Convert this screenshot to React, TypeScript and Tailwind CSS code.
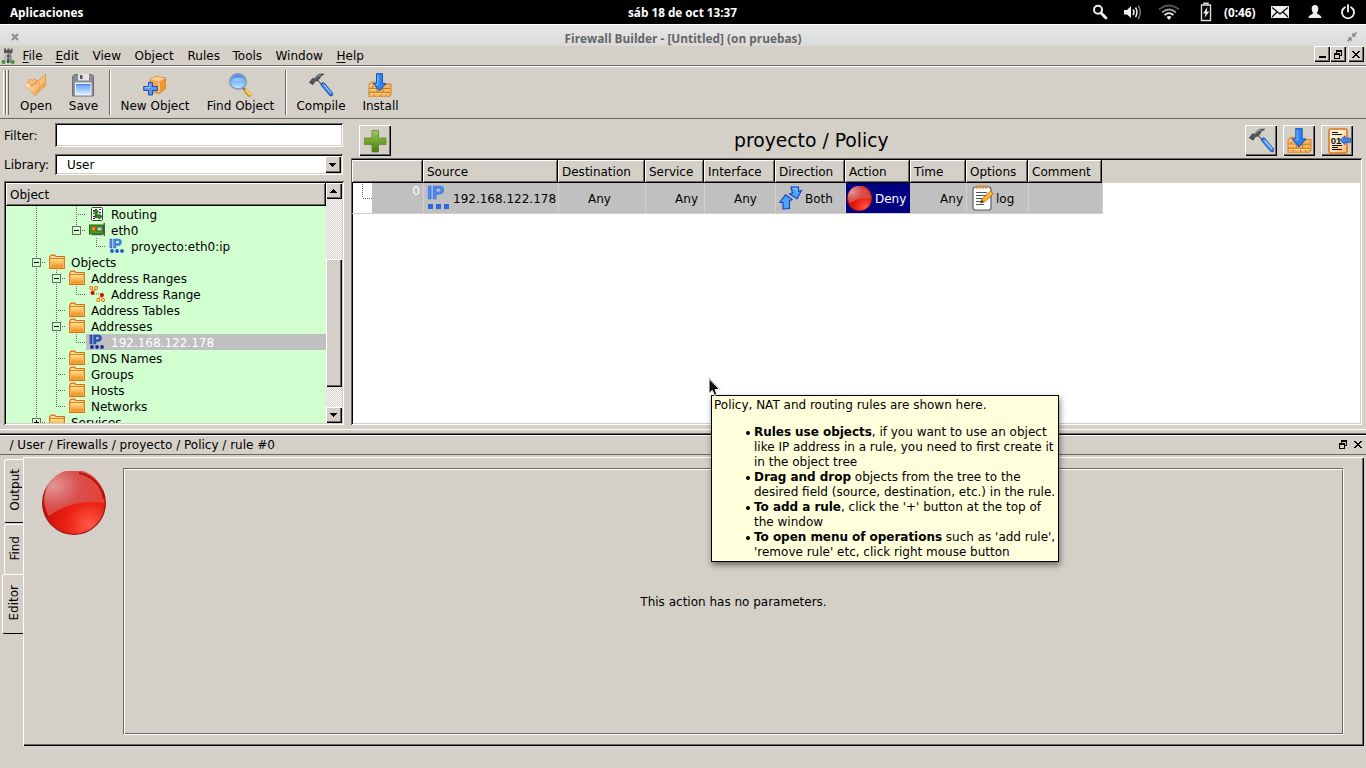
import React from "react";

const RAISED =
  "bg-[#d4d0c8] shadow-[inset_1px_1px_0_#fff,inset_-1px_-1px_0_#000,inset_-2px_-2px_0_#6a6763]";
const HEADER =
  "bg-[#d4d0c8] shadow-[inset_-1px_-1px_0_#000,inset_1px_1px_0_#fff,inset_-2px_-2px_0_#6a6763]";
const SUNKEN =
  "shadow-[inset_1px_1px_0_#6a6763,inset_-1px_-1px_0_#fff,inset_2px_2px_0_#000,inset_-2px_-2px_0_#d4d0c8]";

/* ---------- icons ---------- */

function OpenIcon() {
  return (
    <svg width="24" height="24" viewBox="0 0 24 24">
      <defs>
        <linearGradient id="op" x1="0" y1="0" x2="1" y2="1">
          <stop offset="0" stopColor="#fde0ae" />
          <stop offset="1" stopColor="#f0a04a" />
        </linearGradient>
        <linearGradient id="op2" x1="0" y1="0" x2="1" y2=".6">
          <stop offset="0" stopColor="#fff0d6" />
          <stop offset="1" stopColor="#f3ab5a" />
        </linearGradient>
      </defs>
      <path d="M11 22.500 V10 L12.500 8 L14.500 7.500 L21.500 1.500 V12.500 Z" fill="url(#op)" stroke="#e08e34" strokeWidth=".8" />
      <path d="M3.500 9 L6 6 L8.500 7.500 L10.500 5.500 L12.500 8 L11.500 14 L7 13 Z" fill="#f8bd72" stroke="#d98a35" strokeWidth=".7" />
      <path d="M1 12.500 L3.500 9.500 L7.500 12.500 L15 7.500 L15.500 16 L11 22.500 Z" fill="url(#op2)" stroke="#e39a4a" strokeWidth=".7" />
      <path d="M11 20.500 L16.500 13 L20.500 9 V12.300 Z" fill="#ee9440" opacity=".6" />
      <path d="M7 13.500 L13 9.500" fill="none" stroke="#c98545" strokeWidth="1" />
    </svg>
  );
}

function SaveIcon() {
  return (
    <svg width="24" height="24" viewBox="0 0 24 24">
      <defs>
        <linearGradient id="sv" x1="0" y1="0" x2="0" y2="1">
          <stop offset="0" stopColor="#5d9cf5" />
          <stop offset="1" stopColor="#dbeeff" />
        </linearGradient>
      </defs>
      <path d="M3.500 1.500 H21 L22.500 3 V23 H1.500 V3.500 Z" fill="#8b8b93" stroke="#6d6d75" strokeWidth="1" />
      <rect x="7" y="1" width="11" height="6.500" fill="#e4e4e8" />
      <rect x="9" y="2" width="2.500" height="4" fill="#55555c" />
      <rect x="4" y="9.500" width="16.500" height="13" fill="#f3f6fb" />
      <rect x="5" y="11" width="14.500" height="10.500" fill="url(#sv)" />
      <path d="M5 11.500 H19.500" stroke="#4b7fe2" />
    </svg>
  );
}

function NewObjectIcon() {
  return (
    <svg width="24" height="24" viewBox="0 0 24 24">
      <path d="M7 6.500 L13 3.500 L22.500 5 V16 L16 20.500 L7 18.500 Z" fill="#f6a549" stroke="#c97a25" strokeWidth=".8" />
      <path d="M7.300 6.500 L13 3.800 L22.300 5.200 L16.500 8.500 Z" fill="#ffd293" />
      <path d="M16.500 8.500 L22.500 5.200 V16 L16 20.500 Z" fill="#ee9634" />
      <path d="M16 9 V19" stroke="#ffdba6" strokeWidth="1" />
      <path d="M5.500 9.500 H9.500 V13.500 H14.500 V17.500 H9.500 V22 H5.500 V17.500 H.7 V13.500 H5.500 Z" fill="#5c93ee" stroke="#1c4fae" strokeWidth="1" />
      <path d="M6.700 11 V14.700 H2" fill="none" stroke="#a9cbff" strokeWidth="1" />
    </svg>
  );
}

function FindIcon() {
  return (
    <svg width="24" height="24" viewBox="0 0 24 24">
      <defs>
        <linearGradient id="fi" x1="0" y1="0" x2="0" y2="1">
          <stop offset="0" stopColor="#2e86ee" />
          <stop offset="1" stopColor="#c4efff" />
        </linearGradient>
      </defs>
      <path d="M14.500 14.500 L18 18" stroke="#777" strokeWidth="2.500" />
      <path d="M17 17 L22.500 23" stroke="#c98a18" strokeWidth="4" />
      <path d="M17.300 16.600 L22.500 22.200" stroke="#ffd24d" strokeWidth="2.200" />
      <ellipse cx="10" cy="8.500" rx="8.200" ry="7.600" fill="url(#fi)" stroke="#8a9bb5" strokeWidth="1.600" />
      <path d="M4 7 Q10 2 16 7 Q10 9 4 7" fill="#fff" opacity=".35" />
    </svg>
  );
}

function HammerIcon({ size = 24 }: { size?: number }) {
  return (
    <svg width={size} height={size} viewBox="0 0 24 24">
      <path d="M8.500 5.500 L14.500 12.500" stroke="#6f6f6f" strokeWidth="3" />
      <path d="M9 5 L14.500 11.500" stroke="#e8e8e8" strokeWidth="1.200" />
      <path d="M14 11.500 L22 21" stroke="#174fa8" strokeWidth="4.400" strokeLinecap="round" />
      <path d="M14.200 11.700 L21.900 20.800" stroke="#3f90f2" strokeWidth="2.900" strokeLinecap="round" />
      <path d="M15 11.800 L22 19.800" stroke="#bfe0ff" strokeWidth="1" />
      <path d="M.5 9.500 L3.500 5.500 L5 6 L7.500 3 Q10 .3 15 1.200 Q11.500 2 10.500 5.500 L8 8.200 L6.500 7.500 L4 11.500 Z" fill="#55585a" stroke="#343637" strokeWidth=".8" />
      <path d="M5.500 5.800 Q8 2 12 1.800" fill="none" stroke="#a3a6a8" strokeWidth="1" />
    </svg>
  );
}

function InstallIcon({ size = 24 }: { size?: number }) {
  return (
    <svg width={size} height={size} viewBox="0 0 24 24">
      <path d="M1 11 L4 9 H10 L12 13 L15 13 L18 11 H23 V22 L20 24 H1 Z" fill="#f7b45e" stroke="#cf7a1c" strokeWidth=".9" />
      <path d="M1 15.500 H9 M1 19.500 H22 M4.500 11.500 V15.500 M9 15.500 V19.500 M15 15.500 V19.500 M6 19.500 V23.500 M13 19.500 V23.500 M18 19.500 V23.500 M13 15.500 H22.500" stroke="#d27a18" strokeWidth="1" />
      <path d="M1.500 12.200 H8 M1.500 16.500 H8 M2 20.600 H20" stroke="#ffdca8" strokeWidth="1" />
      <path d="M8.500 .7 H14.500 V10.500 H18 L11.500 18 L5.200 10.500 H8.500 Z" fill="#2d86f0" stroke="#1650bd" strokeWidth="1" />
      <path d="M9.800 1.800 V11.500 H7.500" fill="none" stroke="#8cc4ff" strokeWidth="1" />
    </svg>
  );
}

function TransferIcon() {
  return (
    <svg width="24" height="26" viewBox="0 0 24 26">
      <defs>
        <linearGradient id="tr" x1="0" y1="0" x2="1" y2="1">
          <stop offset="0.3" stopColor="#fff5df" />
          <stop offset="1" stopColor="#f8b26a" />
        </linearGradient>
      </defs>
      <rect x="2" y="1" width="18" height="24" rx="1.500" fill="url(#tr)" stroke="#e0721a" strokeWidth="1.500" />
      <path d="M5 4.500 H11 M5 6.500 H15 M5 17.500 H15 M5 19.500 H11 M5 21.500 H15" stroke="#111" strokeWidth="1" />
      <text x="3.800" y="15.500" fontFamily="Liberation Sans, sans-serif" fontWeight="bold" fontSize="9.500" fill="#111">01</text>
      <path d="M13 12.200 L18 7.800 V10.200 H23.500 V14.400 H18 V16.600 Z" fill="#3c86ec" stroke="#1d50b0" strokeWidth=".8" />
    </svg>
  );
}

function PlusIcon() {
  return (
    <svg width="24" height="24" viewBox="0 0 24 24">
      <defs>
        <linearGradient id="pl" x1="0" y1="0" x2="0" y2="1">
          <stop offset="0" stopColor="#9ccb52" />
          <stop offset="1" stopColor="#4a7d0f" />
        </linearGradient>
      </defs>
      <path d="M9 1.500 H15.500 V9 H23 V15.500 H15.500 V23 H9 V15.500 H1.500 V9 H9 Z" fill="url(#pl)" stroke="#5c8526" strokeOpacity=".75" strokeWidth="1" strokeLinejoin="round" />
    </svg>
  );
}

function RedBall({ size }: { size: number }) {
  return (
    <svg width={size} height={size} viewBox="0 0 64 64" className="shrink-0">
      <defs>
        <radialGradient id="rb1" cx=".75" cy=".85" r=".8">
          <stop offset="0" stopColor="#ff5a48" />
          <stop offset=".45" stopColor="#ec2315" />
          <stop offset="1" stopColor="#c90a06" />
        </radialGradient>
        <radialGradient id="rb2" cx=".15" cy=".35" r=".95">
          <stop offset="0" stopColor="#e39696" />
          <stop offset=".5" stopColor="#d94d4b" />
          <stop offset="1" stopColor="#ea4033" />
        </radialGradient>
      </defs>
      <circle cx="32" cy="32" r="31.300" fill="url(#rb1)" stroke="#9a1512" strokeWidth="1.200" />
      <path d="M7 45 A30 30 0 1 1 62 32 Q30 27.500 7 45" fill="url(#rb2)" />
      <path d="M37 2 A30.500 30.500 0 0 1 62 28" fill="none" stroke="#b30000" strokeWidth="2" opacity=".8" />
    </svg>
  );
}

function FolderIcon() {
  return (
    <svg width="16" height="16" viewBox="0 0 16 16" className="shrink-0">
      <defs>
        <linearGradient id="fo" x1="0" y1="0" x2="0" y2="1">
          <stop offset="0" stopColor="#ffdf84" />
          <stop offset="1" stopColor="#ef8a1c" />
        </linearGradient>
      </defs>
      <path d="M.7 14.300 V3 L2 1.200 H5.500 L7 2.500 H15.300 V14.300 Z" fill="#ffe0a0" stroke="#e06a08" strokeWidth="1.200" />
      <path d="M1 4.500 H15" stroke="#e87b18" strokeWidth="1" />
      <rect x="2" y="5.500" width="12" height="8" fill="url(#fo)" />
    </svg>
  );
}

function IpIcon({ big, dark }: { big?: boolean; dark?: boolean }) {
  const c = dark ? "#2f62d8" : "#4f92f5";
  const s = dark ? "#12309a" : "#1d55cf";
  if (big)
    return (
      <svg width="24" height="24" viewBox="0 0 24 24" className="shrink-0 overflow-visible">
        <text x="0" y="13.300" fontFamily="Liberation Sans, sans-serif" fontWeight="bold" fontSize="18" textLength="17" lengthAdjust="spacingAndGlyphs" fill="#4a8df3" stroke="#2f6fe6" strokeWidth=".7">IP</text>
        <path d="M1 18h5v5H1z M9 18h5v5H9z M17 18h5v5H17z" fill="#2f68e2" />
      </svg>
    );
  return (
    <svg width="16" height="16" viewBox="0 0 16 16" className="shrink-0 overflow-visible">
      <text x="0" y="9.500" fontFamily="Liberation Sans, sans-serif" fontWeight="bold" fontSize="13" textLength="12.500" lengthAdjust="spacingAndGlyphs" fill={c} stroke={s} strokeWidth=".6">IP</text>
      <circle cx="3" cy="13" r="1.900" fill={s} />
      <circle cx="8" cy="13" r="1.900" fill={s} />
      <circle cx="13" cy="13" r="1.900" fill={s} />
    </svg>
  );
}

function RoutingIcon() {
  return (
    <svg width="16" height="16" viewBox="0 0 16 16" className="shrink-0">
      <rect x="2.500" y="1.500" width="11" height="13" rx="1" fill="#fff" stroke="#444" />
      <path d="M4 4.500h3M10 3.500h2M4 7.500h1M10 6.500h2M4 12.500h2M4 10.500h2" stroke="#222" />
      <path d="M6 10.500 V6 H4.500 L7 2.800 L9.500 6 H8.200 V9.300 H10 V7.800 L13.200 10.500 L10 13.200 V11.700 H6 Z" fill="#2d8a1a" stroke="#145208" strokeWidth=".7" />
    </svg>
  );
}

function NicIcon() {
  return (
    <svg width="16" height="16" viewBox="0 0 16 16" className="shrink-0">
      <rect x=".5" y="3" width="14" height="9" fill="#37a60d" stroke="#1e6a06" />
      <rect x="3" y="5" width="3.500" height="3.500" fill="#f0a040" stroke="#d03020" strokeWidth=".8" />
      <rect x="8" y="5" width="5" height="4" fill="#c7cfc2" stroke="#444" strokeWidth=".8" />
      <path d="M3 12.500H13" stroke="#555" strokeWidth="1.500" />
      <path d="M15.300 1V14" stroke="#555" strokeWidth="1.400" />
    </svg>
  );
}

function RangeIcon() {
  return (
    <svg width="16" height="16" viewBox="0 0 16 16" className="shrink-0">
      <g fill="#fff2c0" stroke="#ea7410" strokeWidth="1.100">
        <circle cx="2.200" cy="2" r="1.500" />
        <circle cx="7" cy="2" r="1.500" />
        <circle cx="9.200" cy="14" r="1.500" />
        <circle cx="14" cy="14" r="1.500" />
        <path d="M3 3.500 L4 6 M6.500 3.500 L4 6 M12.500 9 L10 12.500 M12.500 9 L13.500 12.500" />
      </g>
      <path d="M5 8H12" stroke="#2d9a1a" strokeDasharray="1 1" />
      <circle cx="3.500" cy="7" r="2" fill="#d40808" />
      <circle cx="13" cy="9" r="2" fill="#d40808" />
    </svg>
  );
}

function BothIcon() {
  return (
    <svg width="24" height="24" viewBox="0 0 24 24" className="shrink-0">
      <g fill="#49a5f8" stroke="#163cc4" strokeWidth="1.100">
        <path d="M12 1 H19.500 V5.500 L22.500 4.500 L18 12.800 L10.500 8 L13.500 7 Z" />
        <path d="M4 23 V16.500 L.8 16.500 L6.500 8.800 L13 13.500 L10.500 15 V22.500 Z" />
      </g>
      <path d="M14 2.500 H18 V7" fill="none" stroke="#8fd0ff" />
    </svg>
  );
}

function LogIcon() {
  return (
    <svg width="22" height="26" viewBox="0 0 22 26" className="shrink-0">
      <rect x="1" y="2" width="18" height="23" rx="2.500" fill="#fdfdfd" stroke="#5d5d68" strokeWidth="1.200" />
      <path d="M5 0V4M8 0V4M11 0V4M14 0V4" stroke="#f08a1c" strokeWidth="1.300" />
      <path d="M4 7.500h11M4 10.500h11M4 13.500h8M4 16.500h6M4 19.500h8" stroke="#555" strokeWidth="1.200" />
      <path d="M8.500 18 L10 14 L18.500 6 L21.500 8.500 L13 16.500 Z" fill="#ffb52e" stroke="#c06c10" strokeWidth=".9" />
      <path d="M8.500 18 L9.800 14.800 L12 17 Z" fill="#333" />
    </svg>
  );
}

function TowerIcon() {
  return (
    <svg width="14" height="16" viewBox="0 0 14 16">
      <path d="M3 .5h2v1.500h1.500V.5h2V2H10V.5h1.500V5H3Z" fill="#555" />
      <path d="M4.200 5h6l.9 10H3.300Z" fill="#8b8b8b" />
      <path d="M4.500 5h2l-.3 10H4Z" fill="#c4c4c4" />
      <path d="M7 7v2.500M7 11v4" stroke="#333" strokeWidth="1.500" />
      <circle cx="2.500" cy="14" r="2" fill="#3f9c2b" />
      <circle cx="11.800" cy="14" r="2" fill="#3f9c2b" />
    </svg>
  );
}

function RestoreGlyph() {
  return (
    <svg width="9" height="9" viewBox="0 0 9 9" shapeRendering="crispEdges">
      <path d="M2 0H8V6H6V5H7V2H3V3H2Z M0 3H6V9H0Z M1 5V8H5V5Z" fill="#000" fillRule="evenodd" />
    </svg>
  );
}

function CloseGlyph() {
  return (
    <svg width="8" height="7" viewBox="0 0 8 7" shapeRendering="crispEdges">
      <path d="M0 0H2V1H3V2H5V1H6V0H8V1H7V2H6V3H5V4H6V5H7V6H8V7H6V6H5V5H3V6H2V7H0V6H1V5H2V4H3V3H2V2H1V1H0Z" />
    </svg>
  );
}

/* ---------- desktop panel and title bar ---------- */

function DesktopPanel() {
  return (
    <div className="flex h-6 items-center bg-black pl-2.5 pr-2.5 font-['Open_Sans','Noto_Sans',sans-serif] text-[11.750px] font-bold text-white">
      <div className="w-[618px]">Aplicaciones</div>
      <div className="flex-1 whitespace-nowrap">sáb 18 de oct 13:37</div>
      <svg width="16" height="16" viewBox="0 0 16 16" className="mr-[15px]">
        <circle cx="6" cy="5.800" r="4" fill="none" stroke="#eee" strokeWidth="2" />
        <path d="M9 9 L14 14" stroke="#eee" strokeWidth="2.800" strokeLinecap="round" />
      </svg>
      <svg width="20" height="16" viewBox="0 0 20 16" className="mr-[15px]">
        <path d="M1 6H4L8 2V14L4 10.500H1Z" fill="#eee" />
        <path d="M10 5.500Q12 8 10 11M12.500 3.500Q15.500 8 12.500 13" fill="none" stroke="#eee" strokeWidth="1.500" />
        <path d="M15.200 1.500Q19.500 8 15.200 15" fill="none" stroke="#777" strokeWidth="1.500" />
      </svg>
      <svg width="22" height="16" viewBox="0 0 22 16" className="mr-5">
        <g fill="none" strokeWidth="1.800">
          <path d="M1 5.500Q11 -2.500 21 5.500" stroke="#555" />
          <path d="M4 8.500Q11 2.500 18 8.500" stroke="#999" />
          <path d="M6.500 11.200Q11 7 15.500 11.200" stroke="#eee" />
        </g>
        <path d="M8.500 13 Q11 11 13.500 13 L11 16Z" fill="#eee" />
      </svg>
      <svg width="12" height="20" viewBox="0 0 12 20" className="mr-[11px]">
        <path d="M4 3V1.200H8V3M1.500 3H10.500V18.500H1.500Z" fill="none" stroke="#ddd" strokeWidth="1.400" />
        <path d="M7.500 5L3 11.500H5.500L4.500 16L9.300 9.500H6.800Z" fill="#eee" />
      </svg>
      <div className="mr-[12px] w-[35px] whitespace-nowrap pl-px">(0:46)</div>
      <svg width="20" height="14" viewBox="0 0 20 14" className="mr-[17px]">
        <rect x="1" y="1" width="18" height="12" fill="#eee" />
        <path d="M2 2.500L10 9L18 2.500M2 12L7 7M18 12L13 7" fill="none" stroke="#000" strokeWidth="1.100" />
      </svg>
      <svg width="16" height="16" viewBox="0 0 16 16" className="mr-[17px]">
        <path d="M8 1C10.500 1 11.500 2.800 11.300 5C11.200 7 10.300 8 10 9C10 10.500 14.500 10.800 14.500 14H1.500C1.500 10.800 6 10.500 6 9C5.700 8 4.800 7 4.700 5C4.500 2.800 5.500 1 8 1Z" fill="#eee" />
      </svg>
      <svg width="16" height="16" viewBox="0 0 16 16">
        <path d="M5 3.200A6 6 0 1 0 11 3.200" fill="none" stroke="#eee" strokeWidth="1.900" strokeLinecap="round" />
        <path d="M8 1V7.500" stroke="#eee" strokeWidth="1.900" strokeLinecap="round" />
      </svg>
    </div>
  );
}

function TitleBar() {
  return (
    <div className="flex h-[22px] items-center justify-between border-t border-white bg-linear-to-b from-[#e8e8e8] to-[#dadada] pl-[11px] pr-[9px] pt-1 font-['Open_Sans','Noto_Sans',sans-serif] text-[11.850px] font-bold text-[#666]">
      <svg width="8" height="8" viewBox="0 0 8 8" className="mb-[2px]">
        <path d="M1 1L7 7M7 1L1 7" stroke="#8c8c8c" strokeWidth="2" />
      </svg>
      <span className="pt-px">Firewall Builder - [Untitled] (on pruebas)</span>
      <svg width="10" height="10" viewBox="0 0 10 10" fill="#888" className="mb-[2px]">
        <path d="M5.200 4.800V.5L6.800 2L9 0L10 1L8 3.300L9.500 4.800Z M4.800 5.200V9.500L3.200 8L1 10L0 9L2 6.700L.5 5.200Z" />
      </svg>
    </div>
  );
}

/* ---------- menus and toolbar ---------- */

const MENUS: [string, boolean, string][] = [
  ["File", true, "w-[33px]"],
  ["Edit", true, "w-[37px]"],
  ["View", false, "w-[42px]"],
  ["Object", false, "w-[53px]"],
  ["Rules", false, "w-[45px]"],
  ["Tools", false, "w-[43px]"],
  ["Window", false, "w-[61px]"],
  ["Help", true, "w-[40px]"],
];

function MenuBar() {
  return (
    <div className="flex h-[21px] border-b border-white">
      <div className="flex flex-1 border-b border-[#6a6763]">
        <div className="w-[22.500px] pl-px pt-[2px]">
          <TowerIcon />
        </div>
        {MENUS.map(([label, hot, width]) => (
          <div key={label} className={`${width} h-[19px] pt-px leading-[19px]`}>
            {hot ? <span className="underline underline-offset-2">{label[0]}</span> : label[0]}
            {label.slice(1)}
          </div>
        ))}
        <div className="ml-auto flex pr-[2px]">
          <div className={`flex h-4 w-4 items-end justify-center pb-[4px] ${RAISED}`}>
            <div className="h-[2px] w-[7px] bg-black" />
          </div>
          <div className={`mr-[2px] flex h-4 w-4 items-center justify-center ${RAISED}`}>
            <RestoreGlyph />
          </div>
          <div className={`flex h-4 w-4 items-center justify-center ${RAISED}`}>
            <CloseGlyph />
          </div>
        </div>
      </div>
    </div>
  );
}

function Tool({ label, width, children }: { label: string; width: string; children: React.ReactNode }) {
  return (
    <div className={`flex ${width} flex-col items-center pt-[6px]`}>
      {children}
      <span className="mt-[2px] whitespace-nowrap pl-px leading-[15px]">{label}</span>
    </div>
  );
}

function Separator({ className }: { className: string }) {
  return <div className={`mt-[3px] h-[45px] w-[2px] border-l border-r border-l-[#6a6763] border-r-white ${className}`} />;
}

function Toolbar() {
  return (
    <div className="flex h-[52px] border-b border-[#6a6763]">
      <div className="ml-[3px] mr-[3px] mt-[3px] flex h-[45px] w-[6px]">
        <div className="w-[3px] border-l border-r border-l-white border-r-[#6a6763]" />
        <div className="w-[3px] border-l border-r border-l-white border-r-[#6a6763]" />
      </div>
      <Tool label="Open" width="w-[47px]"><OpenIcon /></Tool>
      <Tool label="Save" width="w-[48px]"><SaveIcon /></Tool>
      <Separator className="ml-[2px]" />
      <Tool label="New Object" width="w-[87px]"><NewObjectIcon /></Tool>
      <Tool label="Find Object" width="w-[84px]"><FindIcon /></Tool>
      <Separator className="ml-[3px]" />
      <Tool label="Compile" width="w-[67px]"><HammerIcon /></Tool>
      <Tool label="Install" width="w-[52px]"><InstallIcon /></Tool>
    </div>
  );
}

/* ---------- object tree ---------- */

type Guide = " " | "|" | "+" | "L" | "-" | "_" | "P";
type Node = { guides: string; label: string; icon: React.ReactNode; selected?: boolean };

function GuideCell({ kind }: { kind: Guide }) {
  const box = kind === "-" || kind === "_" || kind === "P";
  const top = kind !== " ";
  const bottom = kind === "|" || kind === "+" || kind === "-" || kind === "P";
  const side = kind !== " " && kind !== "|";
  return (
    <svg width="20" height="16" viewBox="0 0 20 16" shapeRendering="crispEdges" className="shrink-0">
      <g stroke="#6a6763" strokeDasharray="1 1">
        {top && <path d="M10.500 0V8" />}
        {bottom && <path d="M10.500 8V16" />}
        {side && <path d="M10 8.500H20" />}
      </g>
      {box && (
        <>
          <rect x="6.500" y="4.500" width="8" height="8" fill="#d2ffd0" stroke="#6a6763" />
          <path d="M8 8.500H13" stroke="#000" />
          {kind === "P" && <path d="M10.500 6V11" stroke="#000" />}
        </>
      )}
    </svg>
  );
}

const NODES: Node[] = [
  { guides: " | +", label: "Routing", icon: <RoutingIcon /> },
  { guides: " | _", label: "eth0", icon: <NicIcon /> },
  { guides: " |  L", label: "proyecto:eth0:ip", icon: <IpIcon /> },
  { guides: " -", label: "Objects", icon: <FolderIcon /> },
  { guides: " |-", label: "Address Ranges", icon: <FolderIcon /> },
  { guides: " ||L", label: "Address Range", icon: <RangeIcon /> },
  { guides: " |+", label: "Address Tables", icon: <FolderIcon /> },
  { guides: " |-", label: "Addresses", icon: <FolderIcon /> },
  { guides: " ||L", label: "192.168.122.178", icon: <IpIcon dark />, selected: true },
  { guides: " |+", label: "DNS Names", icon: <FolderIcon /> },
  { guides: " |+", label: "Groups", icon: <FolderIcon /> },
  { guides: " |+", label: "Hosts", icon: <FolderIcon /> },
  { guides: " |L", label: "Networks", icon: <FolderIcon /> },
  { guides: " P", label: "Services", icon: <FolderIcon /> },
];

const DITHER =
  "bg-[repeating-conic-gradient(#ffffff_0_25%,#d4d0c8_0_50%)] bg-[length:2px_2px]";

function Arrow({ down }: { down?: boolean }) {
  return (
    <svg width="8" height="4" viewBox="0 0 8 4" shapeRendering="crispEdges">
      <path d={down ? "M0 0H7V1H6V2H5V3H4V4H3V3H2V2H1V1H0Z" : "M3 0H4V1H5V2H6V3H7V4H0V3H1V2H2V1H3Z"} />
    </svg>
  );
}

function ObjectPanel() {
  return (
    <div className="flex w-[344px] shrink-0 flex-col pl-1 pt-1">
      <div className="flex h-6 w-[339px] items-center">
        <label className="w-[51px] pt-[2px]">Filter:</label>
        <div className={`h-6 flex-1 bg-white ${SUNKEN}`} />
      </div>
      <div className="mt-[7px] flex h-[21px] w-[339px] items-center">
        <label className="w-[51px] pt-[2px]">Library:</label>
        <div className={`flex h-[21px] flex-1 items-center bg-white pl-3 pr-[2px] ${SUNKEN}`}>
          <span className="flex-1 pt-[2px]">User</span>
          <div className={`flex h-[17px] w-4 items-center justify-center ${RAISED}`}>
            <Arrow down />
          </div>
        </div>
      </div>
      <div className={`mt-[6px] flex h-[244px] w-[340px] bg-[#d2ffd0] p-[2px] ${SUNKEN}`}>
        <div className="flex w-80 flex-col overflow-hidden">
          <div className={`h-[23px] shrink-0 pl-1 leading-[24px] ${HEADER}`}>Object</div>
          <div className="h-[217px] overflow-hidden">
            {NODES.map((n) => (
              <div key={n.label} className="flex h-4">
                {n.guides.split("").map((g, i) => (
                  <GuideCell key={i} kind={g as Guide} />
                ))}
                <div className={`flex flex-1 pl-[3px] leading-[18px] ${n.selected ? "bg-[#c0c0c0] text-white" : ""}`}>
                  {n.icon}
                  <span className="pl-[6px]">{n.label}</span>
                </div>
              </div>
            ))}
          </div>
        </div>
        <div className={`flex w-4 flex-col ${DITHER}`}>
          <div className={`flex h-4 items-center justify-center ${RAISED}`}><Arrow /></div>
          <div className={`mt-[60px] h-32 ${RAISED}`} />
          <div className={`mt-5 flex h-4 items-center justify-center ${RAISED}`}><Arrow down /></div>
        </div>
      </div>
    </div>
  );
}

/* ---------- rules table ---------- */

const COLS: [string, string][] = [
  ["", "w-[71px]"],
  ["Source", "w-[135px]"],
  ["Destination", "w-[87px]"],
  ["Service", "w-[59px]"],
  ["Interface", "w-[71px]"],
  ["Direction", "w-[70px]"],
  ["Action", "w-[65px]"],
  ["Time", "w-[56px]"],
  ["Options", "w-[62px]"],
  ["Comment", "w-[74px]"],
];

function Cell({ className, children }: { className: string; children?: React.ReactNode }) {
  return (
    <div className={`flex h-[30px] items-center whitespace-nowrap border-r border-[#d4d0c8] bg-[#c0c0c0] ${className}`}>
      {children}
    </div>
  );
}

function PolicyPanel() {
  return (
    <div className="ml-[7px] flex w-[1011px] flex-col">
      <div className="flex h-[39px] items-start pl-2 pr-[9px] pt-[6px]">
        <div className={`flex h-[31px] w-8 items-center justify-center ${RAISED}`}><PlusIcon /></div>
        <h1 className="flex-1 pl-[343px] pt-[2px] text-[18.750px] leading-[28px]">proyecto / Policy</h1>
        <div className="flex gap-[6px]">
          <div className={`flex h-[31px] w-8 items-center justify-center ${RAISED}`}><HammerIcon size={25} /></div>
          <div className={`flex h-[31px] w-8 items-center justify-center ${RAISED}`}><InstallIcon size={25} /></div>
          <div className={`flex h-[31px] w-8 items-center justify-center pl-[3px] ${RAISED}`}><TransferIcon /></div>
        </div>
      </div>
      <div className={`h-[267px] bg-white p-[2px] pl-px ${SUNKEN}`}>
        <div className="flex h-[23px] bg-[#d4d0c8]">
          {COLS.map(([name, width]) => (
            <div key={name} className={`${width} h-[23px] pl-1 pt-px leading-[23px] ${HEADER}`}>{name}</div>
          ))}
        </div>
        <div className="flex h-[31px] border-b border-[#d4d0c8] pl-[10px] [clip-path:inset(0_257px_0_0)]">
          <svg width="10" height="30" viewBox="0 0 10 30" shapeRendering="crispEdges">
            <path d="M.5 1V15M1 15.500H10" stroke="#6a6763" strokeDasharray="1 1" />
          </svg>
          <Cell className="w-[52px] justify-end pb-[13px] pr-[3px] text-white">0</Cell>
          <Cell className="w-[135px] pl-[3px]">
            <IpIcon big />
            <span className="pl-[2px] pt-[2px]">192.168.122.178</span>
          </Cell>
          <Cell className="w-[87px] pl-[29px] pt-[2px]">Any</Cell>
          <Cell className="w-[59px] justify-end pr-[6px] pt-[2px]">Any</Cell>
          <Cell className="w-[71px] pl-[29px] pt-[2px]">Any</Cell>
          <Cell className="w-[70px] pl-[3px]">
            <BothIcon />
            <span className="pl-[2px] pt-[2px]">Both</span>
          </Cell>
          <div className="flex h-[30px] w-[64px] items-center gap-[3px] bg-[#000080] pl-px text-white">
            <RedBall size={25} />
            <span className="pt-[2px]">Deny</span>
          </div>
          <Cell className="w-[57px] justify-end pr-[3px] pt-[2px]">Any</Cell>
          <Cell className="w-[62px] pl-[5px]">
            <LogIcon />
            <span className="pl-[2px] pt-[2px]">log</span>
          </Cell>
          <Cell className="w-[74px]" />
        </div>
      </div>
    </div>
  );
}

/* ---------- editor dock ---------- */

function SideTab({ label, className }: { label: string; className: string }) {
  return (
    <div className={`flex items-center justify-center rounded-l-[3px] border-l border-t border-white pb-[2px] pl-[2px] ${className}`}>
      <span className="rotate-180 leading-[15px] [writing-mode:vertical-rl]">{label}</span>
    </div>
  );
}

function EditorDock() {
  return (
    <div className="flex flex-1 flex-col border-t border-white">
      <div className="mt-[3px] h-px bg-[#6a6763]" />
      <div className="h-px bg-black" />
      <div className="flex h-5 items-center border-b border-t border-b-[#6a6763] border-t-white pl-[9.500px] pr-1">
        <span className="flex-1 pt-px">/ User / Firewalls / proyecto / Policy / rule #0</span>
        <div className="mb-[2px] flex items-center gap-[6px]">
          <RestoreGlyph />
          <CloseGlyph />
        </div>
      </div>
      <div className="mt-[2px] flex h-[289px]">
        <div className="flex w-[23px] shrink-0 flex-col items-end pt-[2px]">
          <SideTab label="Output" className="h-[64px] w-[19px] border-b border-b-black" />
          <SideTab label="Find" className="mt-px h-[50px] w-[19px]" />
          <SideTab label="Editor" className="h-[60px] w-[21px] border-b border-b-black" />
        </div>
        <div className="flex h-[289px] w-[1341px] pl-[19px] pr-[20px] pt-[11px] shadow-[inset_1px_1px_0_#fff,inset_-1px_-1px_0_#000,inset_-2px_-2px_0_#6a6763]">
          <div className="w-[81px] pt-[3px]">
            <RedBall size={64} />
          </div>
          <div className="flex h-[267px] flex-1 items-center justify-center border border-white border-l-[#6a6763] border-t-[#6a6763] pt-[2px] shadow-[inset_1px_1px_0_#fff,inset_-1px_-1px_0_#6a6763]">
            <span>This action has no parameters.</span>
          </div>
        </div>
      </div>
    </div>
  );
}

/* ---------- floating help ---------- */

const HELP: [string, string[]][] = [
  ["Rules use objects", [", if you want to use an object", "like IP address in a rule, you need to first create it", "in the object tree"]],
  ["Drag and drop", [" objects from the tree to the", "desired field (source, destination, etc.) in the rule."]],
  ["To add a rule", [", click the '+' button at the top of", "the window"]],
  ["To open menu of operations", [" such as 'add rule',", "'remove rule' etc, click right mouse button"]],
];

function HelpTip() {
  return (
    <div className="absolute left-[711px] top-[395px] h-[167px] w-[348px] border border-black bg-[#ffffdc] pl-[2px] pt-[2px] leading-[15px] shadow-[1px_3px_6px_rgba(0,0,0,0.5)]">
      <p>Policy, NAT and routing rules are shown here.</p>
      <ul className="mt-3">
        {HELP.map(([bold, lines]) => (
          <li key={bold} className="flex whitespace-nowrap pl-8">
            <span className="mr-1 mt-[6px] h-1 w-1 rounded-full bg-black" />
            <div>
              {lines.map((line, i) => (
                <div key={line} className="whitespace-pre">
                  {i === 0 && <b className="tracking-[-0.040px]">{bold}</b>}
                  {line}
                </div>
              ))}
            </div>
          </li>
        ))}
      </ul>
    </div>
  );
}

function Pointer() {
  return (
    <svg width="13" height="20" viewBox="0 0 13 20" className="absolute left-[708px] top-[377px]">
      <path d="M1 1.500V16.500L4.300 13.500L6.500 18.500L9 17.300L7 12.500H11.500Z" fill="#111" stroke="#fff" strokeWidth="1" />
      <path d="M.5 .5L12.500 12.800" stroke="#999" strokeWidth=".6" />
    </svg>
  );
}

export default function App() {
  return (
    <div className="relative flex h-[768px] w-[1366px] flex-col overflow-hidden bg-[#d4d0c8] font-['DejaVu_Sans',sans-serif] text-[12px] leading-[15px] text-black">
      <DesktopPanel />
      <TitleBar />
      <MenuBar />
      <Toolbar />
      <div className="flex h-[310px]">
        <ObjectPanel />
        <PolicyPanel />
      </div>
      <EditorDock />
      <HelpTip />
      <Pointer />
    </div>
  );
}
